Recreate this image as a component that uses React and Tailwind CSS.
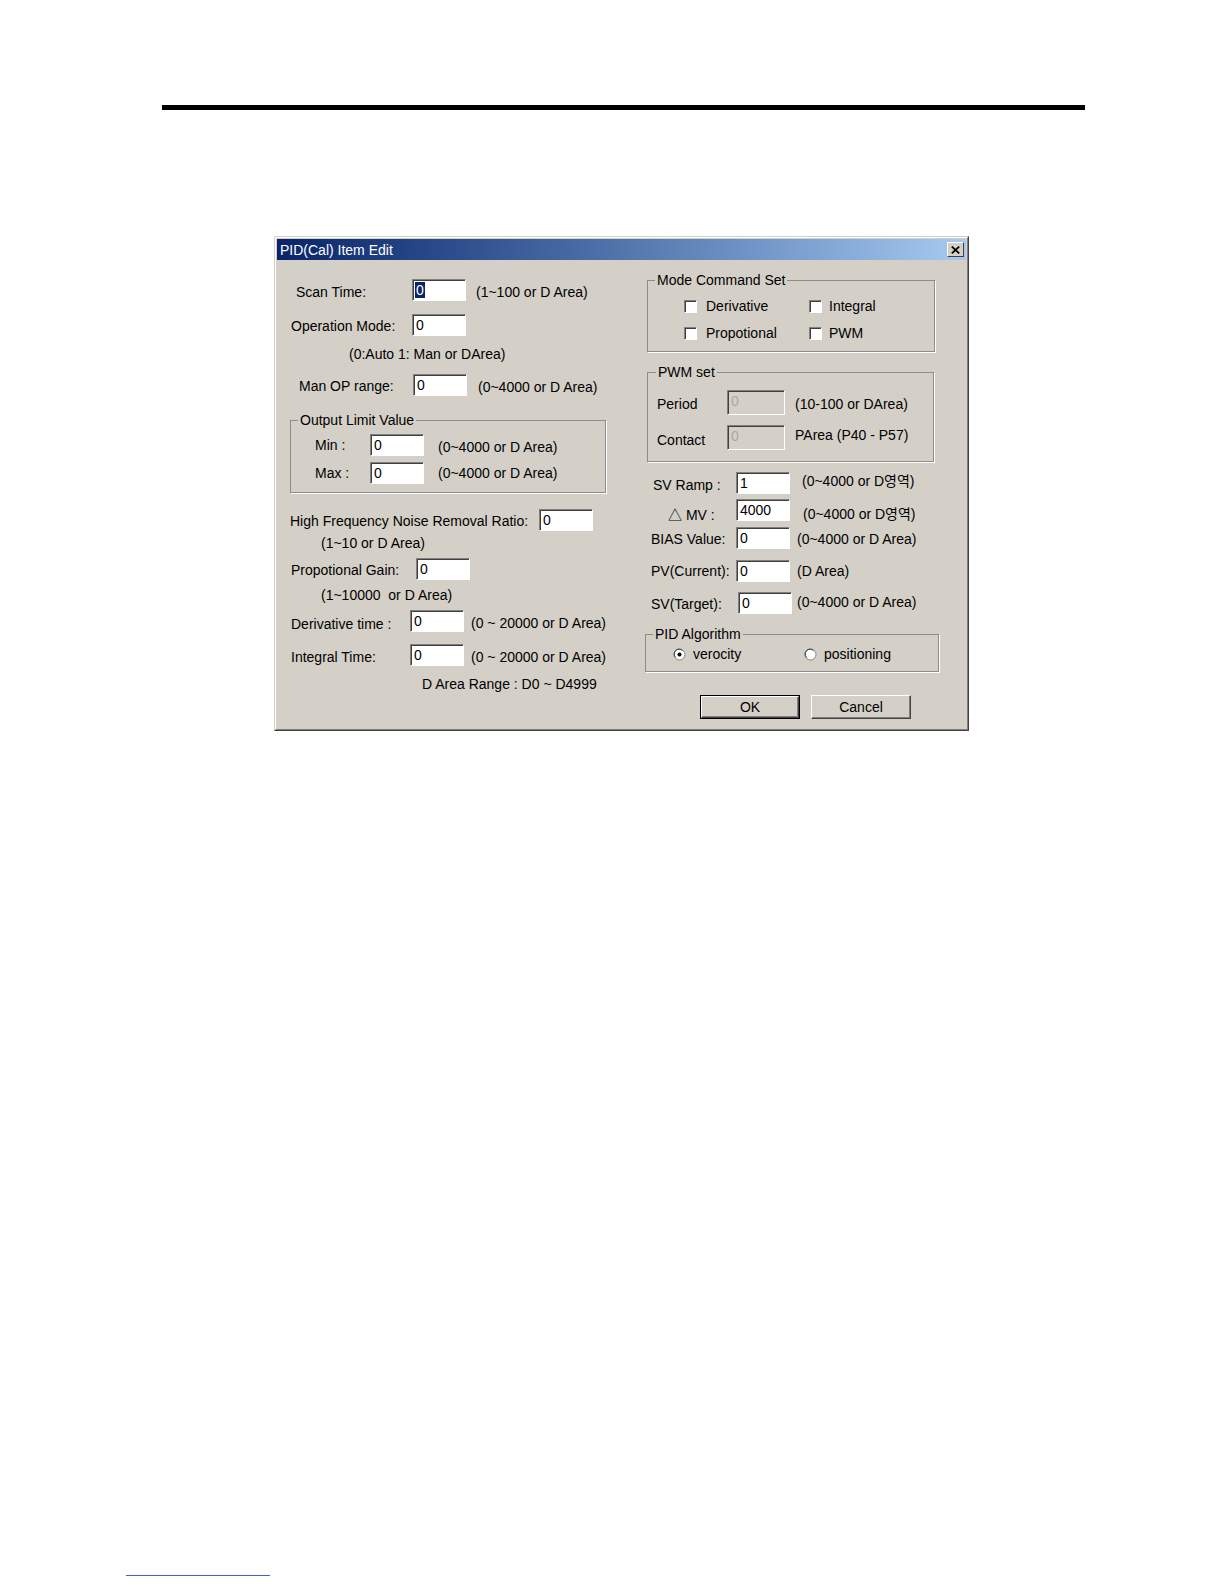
import React from 'react';

function Edit({ value = '0', selected = false, disabled = false, size = 'w-[54px] h-[22px]' }) {
    return (
        <div
            className={`${size} shrink-0 flex items-start border-t border-l border-b border-r border-t-[#808080] border-l-[#808080] border-b-white border-r-white shadow-[inset_1px_1px_0_#404040] ${disabled ? 'bg-[#d4d0c8] text-[#a8a8a8]' : 'bg-white text-black'}`}
        >
            <span className={`ml-[2px] mt-[2px] px-[1px] leading-[16px] ${selected ? 'bg-[#0a246a] text-white' : ''}`}>
                {value}
            </span>
        </div>
    );
}

function Check() {
    return (
        <div className="w-[13px] h-[13px] shrink-0 bg-white border-t border-l border-b border-r border-t-[#808080] border-l-[#808080] border-b-white border-r-white shadow-[inset_1px_1px_0_#404040]" />
    );
}

function Radio({ checked = false }) {
    return (
        <svg width="13" height="13" viewBox="0 0 13 13" className="shrink-0">
            <circle cx="6.5" cy="6.5" r="5.5" fill="#fff" stroke="#808080" strokeWidth="1" />
            <path d="M2.6 9.4 A4.4 4.4 0 0 1 9.4 2.6" fill="none" stroke="#404040" strokeWidth="1" />
            {checked && <circle cx="6.5" cy="6.5" r="2" fill="#000" />}
        </svg>
    );
}

function Button({ children, isDefault = false }) {
    return (
        <div className={`w-[100px] h-[24px] shrink-0 ${isDefault ? 'border border-black' : ''}`}>
            <div className="w-full h-full flex items-center justify-center bg-[#d4d0c8] border-t border-l border-b border-r border-t-white border-l-white border-b-[#404040] border-r-[#404040] shadow-[inset_-1px_-1px_0_#808080]">
                {children}
            </div>
        </div>
    );
}

function Group({ title, className, legendClass, children }) {
    return (
        <fieldset className={`border border-[#8c8c8c] shadow-[1px_1px_0_#fff] ${className}`}>
            <legend className={`px-[2px] leading-[16px] ${legendClass}`}>{title}</legend>
            {children}
        </fieldset>
    );
}

export default function App() {

    return (

        <div className="w-[1224px] h-[1584px] bg-white flex flex-col font-['Liberation_Sans','Noto_Sans_CJK_KR',sans-serif] text-[14px] leading-[16px] text-black">

            <div className="mt-[105px] ml-[162px] w-[923px] h-[5px] bg-black" />

            {/* dialog window */}
            <div className="mt-[126px] ml-[274px] w-[695px] h-[495px] border border-t-[#d4d0c8] border-l-[#d4d0c8] border-r-[#404040] border-b-[#404040]">

                <div className="w-full h-full flex flex-col border border-t-white border-l-white border-r-[#808080] border-b-[#808080] p-px bg-[#d4d0c8]">

                    <div className="h-[21px] shrink-0 flex items-center bg-gradient-to-r from-[#0a246a] to-[#a6caf0]">
                        <span className="ml-[3px] text-white">PID(Cal) Item Edit</span>
                        <div className="ml-auto mr-[2px] w-[17px] h-[15px] flex items-center justify-center bg-[#d4d0c8] border-t border-l border-b border-r border-t-white border-l-white border-b-[#404040] border-r-[#404040]">
                            <svg width="9" height="8" viewBox="0 0 9 8">
                                <path d="M0.8 0.6 L8.2 7.4 M8.2 0.6 L0.8 7.4" stroke="#000" strokeWidth="1.8" />
                            </svg>
                        </div>
                    </div>

                    <div className="flex flex-1">

                        {/* left column */}
                        <div className="w-[363px] shrink-0 flex flex-col">

                            <div className="mt-[19px] flex items-center h-[22px]">
                                <span className="ml-[19px] w-[116px] shrink-0 pt-[3px]">Scan Time:</span>
                                <Edit selected />
                                <span className="ml-[10px] pt-[3px]">(1~100 or D Area)</span>
                            </div>

                            <div className="mt-[13px] flex items-center h-[22px]">
                                <span className="ml-[14px] w-[121px] shrink-0 pt-[1px]">Operation Mode:</span>
                                <Edit />
                            </div>

                            <div className="mt-[10px] ml-[72px] h-[16px]">(0:Auto 1: Man or DArea)</div>

                            <div className="mt-[12px] flex items-center h-[22px]">
                                <span className="ml-[22px] w-[114px] shrink-0 pt-[1px]">Man OP range:</span>
                                <Edit />
                                <span className="ml-[11px] pt-[3px]">(0~4000 or D Area)</span>
                            </div>

                            <Group title="Output Limit Value" className="mt-[16px] ml-[13px] w-[316px] pb-[8px]" legendClass="ml-[7px]">
                                <div className="mt-[6px] flex items-center h-[22px]">
                                    <span className="ml-[24px] w-[55px] shrink-0">Min :</span>
                                    <Edit />
                                    <span className="ml-[14px] pt-[4px]">(0~4000 or D Area)</span>
                                </div>
                                <div className="mt-[6px] flex items-center h-[22px]">
                                    <span className="ml-[24px] w-[55px] shrink-0">Max :</span>
                                    <Edit />
                                    <span className="ml-[14px]">(0~4000 or D Area)</span>
                                </div>
                            </Group>

                            <div className="mt-[16px] flex items-center h-[22px]">
                                <span className="ml-[13px] w-[249px] shrink-0 pt-[1px] whitespace-nowrap">High Frequency Noise Removal Ratio:</span>
                                <Edit />
                            </div>

                            <div className="mt-[4px] ml-[44px] h-[16px]">(1~10 or D Area)</div>

                            <div className="mt-[7px] flex items-center h-[22px]">
                                <span className="ml-[14px] w-[125px] shrink-0 pt-[1px]">Propotional Gain:</span>
                                <Edit />
                            </div>

                            <div className="mt-[7px] ml-[44px] h-[16px] whitespace-pre">(1~10000  or D Area)</div>

                            <div className="mt-[7px] flex items-center h-[22px]">
                                <span className="ml-[14px] w-[119px] shrink-0 pt-[5px]">Derivative time :</span>
                                <Edit />
                                <span className="ml-[7px] pt-[3px]">(0 ~ 20000 or D Area)</span>
                            </div>

                            <div className="mt-[12px] flex items-center h-[22px]">
                                <span className="ml-[14px] w-[119px] shrink-0 pt-[3px]">Integral Time:</span>
                                <Edit />
                                <span className="ml-[7px] pt-[3px]">(0 ~ 20000 or D Area)</span>
                            </div>

                            <div className="mt-[10px] ml-[145px] h-[16px]">D Area Range : D0 ~ D4999</div>

                        </div>

                        {/* right column */}
                        <div className="flex-1 flex flex-col">

                            <Group title="Mode Command Set" className="mt-[12px] ml-[7px] w-[288px] pb-[10px]" legendClass="ml-[7px]">
                                <div className="mt-[10px] flex items-center h-[16px]">
                                    <div className="ml-[36px] w-[125px] shrink-0 flex items-center">
                                        <Check />
                                        <span className="ml-[9px]">Derivative</span>
                                    </div>
                                    <div className="flex items-center">
                                        <Check />
                                        <span className="ml-[7px]">Integral</span>
                                    </div>
                                </div>
                                <div className="mt-[11px] flex items-center h-[16px]">
                                    <div className="ml-[36px] w-[125px] shrink-0 flex items-center">
                                        <Check />
                                        <span className="ml-[9px]">Propotional</span>
                                    </div>
                                    <div className="flex items-center">
                                        <Check />
                                        <span className="ml-[7px]">PWM</span>
                                    </div>
                                </div>
                            </Group>

                            <Group title="PWM set" className="mt-[12px] ml-[7px] w-[287px] pb-[11px]" legendClass="ml-[8px]">
                                <div className="mt-[10px] flex items-center h-[25px]">
                                    <span className="ml-[9px] w-[70px] shrink-0 pt-[2px]">Period</span>
                                    <Edit disabled size="w-[58px] h-[25px]" />
                                    <span className="ml-[10px] pt-[2px]">(10-100 or DArea)</span>
                                </div>
                                <div className="mt-[10px] flex items-center h-[25px]">
                                    <span className="ml-[9px] w-[70px] shrink-0 pt-[4px]">Contact</span>
                                    <Edit disabled size="w-[58px] h-[25px]" />
                                    <span className="ml-[10px] mb-[6px]">PArea (P40 - P57)</span>
                                </div>
                            </Group>

                            <div className="mt-[10px] flex items-center h-[22px]">
                                <span className="ml-[13px] w-[83px] shrink-0 pt-[4px]">SV Ramp :</span>
                                <Edit value="1" />
                                <span className="ml-[12px] mb-[4px]">(0~4000 or D영역)</span>
                            </div>

                            <div className="mt-[5px] flex items-center h-[22px]">
                                <span className="ml-[28px] w-[68px] shrink-0 pt-[9px]">△ MV :</span>
                                <Edit value="4000" />
                                <span className="ml-[13px] pt-[8px]">(0~4000 or D영역)</span>
                            </div>

                            <div className="mt-[6px] flex items-center h-[22px]">
                                <span className="ml-[11px] w-[85px] shrink-0 pt-[2px]">BIAS Value:</span>
                                <Edit />
                                <span className="ml-[7px] pt-[2px]">(0~4000 or D Area)</span>
                            </div>

                            <div className="mt-[11px] flex items-center h-[22px]">
                                <span className="ml-[11px] w-[85px] shrink-0">PV(Current):</span>
                                <Edit />
                                <span className="ml-[7px]">(D Area)</span>
                            </div>

                            <div className="mt-[10px] flex items-center h-[22px]">
                                <span className="ml-[11px] w-[87px] shrink-0 pt-[1px]">SV(Target):</span>
                                <Edit />
                                <span className="ml-[5px] mb-[2px]">(0~4000 or D Area)</span>
                            </div>

                            <Group title="PID Algorithm" className="mt-[12px] ml-[5px] w-[294px] pb-[9px]" legendClass="ml-[7px]">
                                <div className="mt-[4px] flex items-center h-[16px]">
                                    <div className="ml-[27px] w-[131px] shrink-0 flex items-center">
                                        <Radio checked />
                                        <span className="ml-[7px]">verocity</span>
                                    </div>
                                    <div className="flex items-center">
                                        <Radio />
                                        <span className="ml-[7px]">positioning</span>
                                    </div>
                                </div>
                            </Group>

                            <div className="mt-[23px] ml-[60px] flex gap-[11px]">
                                <Button isDefault>OK</Button>
                                <Button>Cancel</Button>
                            </div>

                        </div>

                    </div>

                </div>

            </div>

            <div className="mt-[844px] ml-[126px] w-[144px] h-px bg-[#4060d0]" />

        </div>
    );
}
